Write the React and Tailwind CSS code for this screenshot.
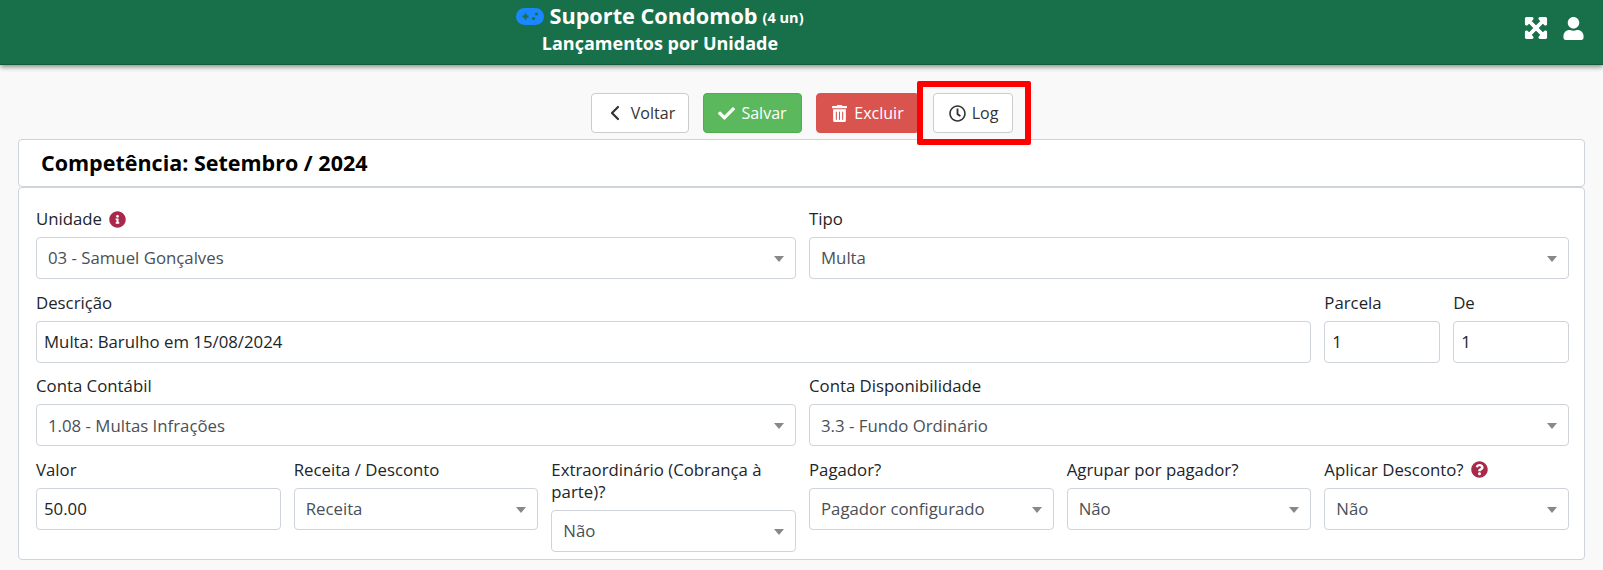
import React from "react";
import { FaCheck, FaRegClock, FaUser, FaTrashAlt, FaInfoCircle, FaQuestionCircle, FaExpandArrowsAlt } from "react-icons/fa";
import { ChevronLeft } from "lucide-react";

const Label = ({ children, icon }) => (
  <label className="flex items-center gap-[7px] text-[16.8px] leading-[22px] text-[#212529] mb-[7px]">
    {children}
    {icon}
  </label>
);

const Select = ({ label, value, icon, span = "col-span-6" }) => (
  <div className={span}>
    <Label icon={icon}>{label}</Label>
    <div className="relative h-[42px] rounded-[4px] border border-[#ced4da] bg-white flex items-center pl-[11px] text-[16.8px] text-[#495057]">
      {value}
      <span className="absolute right-[11px] top-[18px] h-0 w-0 border-x-[5px] border-t-[6px] border-x-transparent border-t-[#888888]" />
    </div>
  </div>
);

const Input = ({ label, value, span }) => (
  <div className={span}>
    <Label>{label}</Label>
    <div className="h-[42px] rounded-[4px] border border-[#ced4da] bg-white flex items-center pl-[7px] text-[16.8px] text-[#212529]">
      {value}
    </div>
  </div>
);

const Gamepad = () => (
  <svg width="28" height="17" viewBox="0 0 28 17" className="shrink-0">
    <rect x="0" y="0" width="28" height="17" rx="8.5" fill="#1a87ff" />
    <path d="M6.5 8.5h6M9.5 5.5v6" stroke="#18704a" strokeWidth="2" />
    <circle cx="20.5" cy="6" r="1.6" fill="#18704a" />
    <circle cx="17.5" cy="10.5" r="1.6" fill="#18704a" />
  </svg>
);

export default function App() {
  return (
    <div className="min-h-[570px] bg-[#f9f9f9] font-['Open_Sans',sans-serif]">
      <header className="relative h-[65px] bg-[#18704a] border-b border-[#125a3a] shadow-[0_2px_5px_rgba(0,0,0,0.45)] flex text-white">
        <div className="flex-1 flex flex-col items-center pt-[2px] pr-[283px]">
          <div className="flex items-center gap-[5px] h-[28px]">
            <Gamepad />
            <span className="text-[21.7px] font-bold">Suporte Condomob</span>
            <span className="text-[14.5px] font-bold mt-[3px]">(4 un)</span>
          </div>
          <div className="text-[18px] font-bold leading-[26px]">Lançamentos por Unidade</div>
        </div>
        <div className="absolute right-[18px] top-[16px] flex items-center gap-[14px]">
          <FaExpandArrowsAlt size={24} className="stroke-white stroke-[24px]" />
          <FaUser size={23} />
        </div>
      </header>

      <div className="flex justify-center gap-[14px] pt-[28px] h-[74px] pl-[1px]">
        <button className="h-[40px] w-[98px] rounded-[4px] border border-[#ccc] bg-white text-[16px] text-[#333] flex items-center justify-center gap-[4px] pr-[2px]">
          <ChevronLeft size={24} strokeWidth={2.2} /> Voltar
        </button>
        <button className="h-[40px] w-[99px] rounded-[4px] border border-[#4cae4c] bg-[#5cb85c] text-[16px] text-white flex items-center justify-center gap-[6px]">
          <FaCheck size={17} /> Salvar
        </button>
        <button className="h-[40px] w-[103px] rounded-[4px] border border-[#d9534f] bg-[#d9534f] text-[16px] text-white flex items-center justify-center gap-[6px]">
          <FaTrashAlt size={17} /> Excluir
        </button>
        <div className="relative">
          <button className="h-[40px] w-[80px] rounded-[4px] border border-[#ccc] bg-white text-[16px] text-[#333] flex items-center justify-center gap-[6px] pl-[1px]">
            <FaRegClock size={17} /> Log
          </button>
          <div className="absolute -left-[16px] -top-[12px] w-[114px] h-[64px] rounded-[2px] border-[6px] border-[#ff0000]" />
        </div>
      </div>

      <div className="mx-[18px]">
        <div className="h-[48px] rounded-[4px] border border-[#ced4da] bg-white flex items-center pl-[22px] text-[21.5px] font-bold text-black">
          Competência: Setembro / 2024
        </div>
        <div className="rounded-[4px] border border-[#ced4da] bg-white pl-[17px] pr-[15px] pt-[20px] pb-[7px] grid grid-cols-12 gap-x-[13px] gap-y-[12.67px] items-start">
          <Select label="Unidade" value="03 - Samuel Gonçalves" icon={<FaInfoCircle size={17} className="text-[#a8294a]" />} />
          <Select label="Tipo" value="Multa" />
          <Input label="Descrição" value="Multa: Barulho em 15/08/2024" span="col-span-10" />
          <Input label="Parcela" value="1" span="col-span-1" />
          <Input label="De" value="1" span="col-span-1" />
          <Select label="Conta Contábil" value="1.08 - Multas Infrações" />
          <Select label="Conta Disponibilidade" value="3.3 - Fundo Ordinário" />
          <Input label="Valor" value="50.00" span="col-span-2" />
          <Select label="Receita / Desconto" value="Receita" span="col-span-2" />
          <Select label="Extraordinário (Cobrança à parte)?" value="Não" span="col-span-2" />
          <Select label="Pagador?" value="Pagador configurado" span="col-span-2" />
          <Select label="Agrupar por pagador?" value="Não" span="col-span-2" />
          <Select label="Aplicar Desconto?" value="Não" span="col-span-2" icon={<FaQuestionCircle size={17} className="text-[#a8294a]" />} />
        </div>
      </div>
    </div>
  );
}
